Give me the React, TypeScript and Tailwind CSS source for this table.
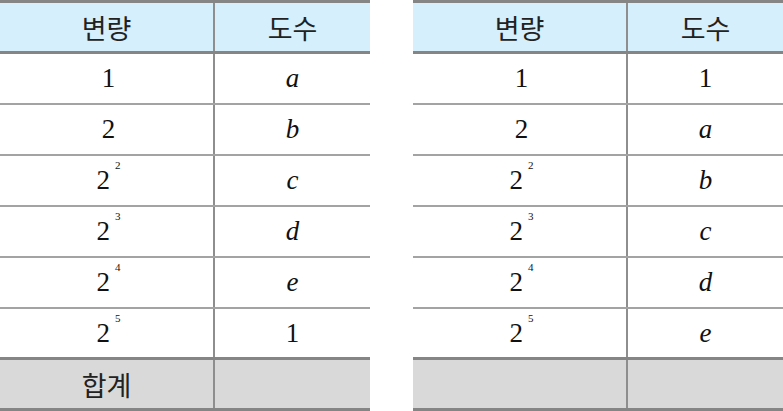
type Cell = { base: string; exp?: string; italic?: boolean };

function Value({ cell }: { cell: Cell }) {
  if (cell.italic) {
    return <span className="italic text-[27px] leading-none">{cell.base}</span>;
  }
  return (
    <span className="text-[27px] leading-none inline-flex items-start">
      {cell.base}
      {cell.exp && <sup className="text-[11px] ml-[5px] top-0 -mt-[2px]">{cell.exp}</sup>}
    </span>
  );
}

function Label({ text }: { text?: string }) {
  return (
    <span className="font-['Noto_Sans_CJK_KR',sans-serif] text-[27px] leading-none text-[#222]">
      {text}
    </span>
  );
}

function FreqTable({
  rows,
  footer,
}: {
  rows: [Cell, Cell][];
  footer?: string;
}) {
  return (
    <div className="w-[370px] flex flex-col border-t-[3px] border-b-[3px] border-[#858585] font-['Liberation_Serif',serif] text-[#111]">
      <div className="grid grid-cols-[213px_157px] h-[51px] bg-[#d6effc] border-b-[3px] border-[#858585]">
        <div className="flex items-center justify-center">
          <Label text="변량" />
        </div>
        <div className="flex items-center justify-center border-l-2 border-[#8e8e8e]">
          <Label text="도수" />
        </div>
      </div>
      {rows.map((r, i) => (
        <div
          key={i}
          className={
            i < rows.length - 1
              ? 'grid grid-cols-[213px_157px] h-[51px] border-b-2 border-[#a3a3a3]'
              : 'grid grid-cols-[213px_157px] h-[51px] border-b-[3px] border-[#858585]'
          }>
          <div className="flex items-center justify-center pl-[4px]">
            <Value cell={r[0]} />
          </div>
          <div className="flex items-center justify-center border-l-2 border-[#8e8e8e]">
            <Value cell={r[1]} />
          </div>
        </div>
      ))}
      <div className="grid grid-cols-[213px_157px] h-[48px] bg-[#d9d9d9]">
        <div className="flex items-center justify-center">
          <Label text={footer} />
        </div>
        <div className="border-l-2 border-[#8e8e8e]" />
      </div>
    </div>
  );
}

const n = (base: string, exp?: string): Cell => ({ base, exp });
const v = (base: string): Cell => ({ base, italic: true });

export default function App() {
  const left: [Cell, Cell][] = [
    [n('1'), v('a')],
    [n('2'), v('b')],
    [n('2', '2'), v('c')],
    [n('2', '3'), v('d')],
    [n('2', '4'), v('e')],
    [n('2', '5'), n('1')],
  ];
  const right: [Cell, Cell][] = [
    [n('1'), n('1')],
    [n('2'), v('a')],
    [n('2', '2'), v('b')],
    [n('2', '3'), v('c')],
    [n('2', '4'), v('d')],
    [n('2', '5'), v('e')],
  ];
  return (
    <div className="w-[783px] h-[411px] bg-white flex gap-[43px]">
      <FreqTable rows={left} footer="합계" />
      <FreqTable rows={right} />
    </div>
  );
}
